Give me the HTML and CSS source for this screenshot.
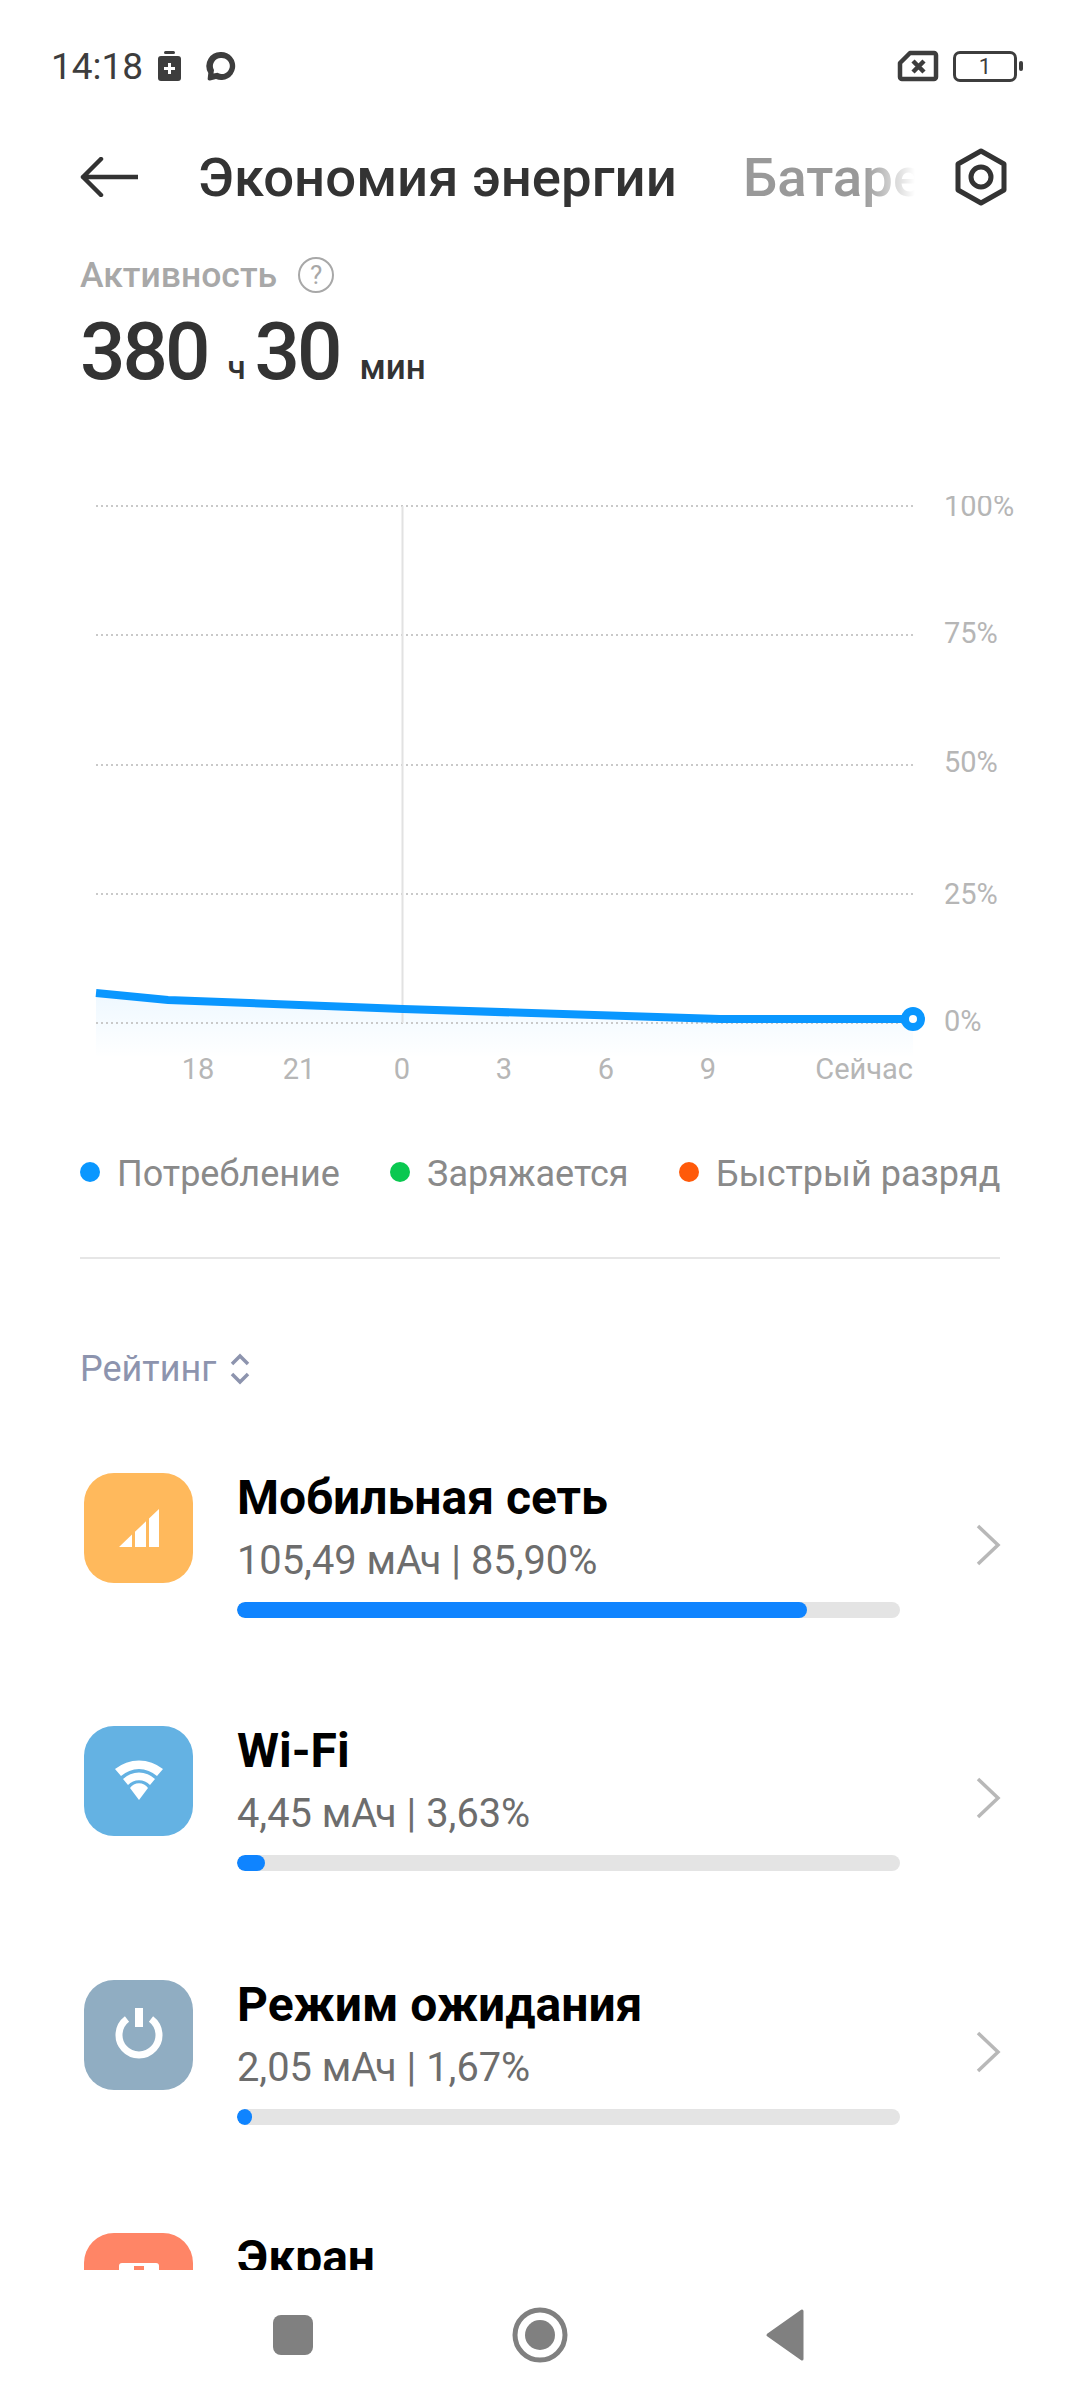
FILE: index.html
```html
<!DOCTYPE html>
<html lang="ru">

<head>
    <meta charset="UTF-8">
    <title>Экономия энергии</title>
    <link rel="stylesheet" href="styles.css">
</head>

<body>
    <!-- Status bar -->
    <div class="status-bar">
        <span class="clock">14:18</span>
        <svg class="st-kit" width="24" height="30" viewBox="0 0 24 30">
            <rect x="6" y="0" width="11" height="3" rx="1.5" fill="#3d3d3d" />
            <rect x="0" y="5" width="23" height="25" rx="3" fill="#3d3d3d" />
            <path d="M11.5 12v11M6 17.5h11" stroke="#fff" stroke-width="3" />
        </svg>
        <svg class="st-chat" width="30" height="30" viewBox="0 0 30 30">
            <path d="M15 1a14 14 0 1 1-5 27l-6 1.500c-1.500.3-2.500-.5-2.300-2l.6-5.500A14 14 0 0 1 15 1zm0 6a8 8 0 0 0-7 12l-.5 3.500 4-.8a8 8 0 1 0 3.500-14.700z" fill="#3d3d3d" />
        </svg>
        <div class="st-right">
            <svg width="42" height="32" viewBox="0 0 42 32">
                <path d="M13 3h24a2 2 0 0 1 2 2v22a2 2 0 0 1-2 2H5a2 2 0 0 1-2-2V13z" fill="none" stroke="#3d3d3d" stroke-width="4.500" stroke-linejoin="round" />
                <path d="M16 11l11 11M27 11L16 22" stroke="#3d3d3d" stroke-width="4.500" />
            </svg>
            <div class="battery"><span>1</span></div>
            <div class="battery-nub"></div>
        </div>
    </div>

    <!-- Header with tabs -->
    <div class="header">
        <svg class="back" width="58" height="40" viewBox="0 0 58 40">
            <path d="M21 2L3 20l18 18M3 20h55" fill="none" stroke="#333" stroke-width="4.500" stroke-linecap="round" stroke-linejoin="round" />
        </svg>
        <div class="tab-active">Экономия энергии</div>
        <div class="tab-next">Батарея</div>
        <svg class="settings" width="54" height="58" viewBox="0 0 54 58">
            <path d="M27 3l23 13v26L27 55 4 42V16z" fill="none" stroke="#333" stroke-width="5" stroke-linejoin="round" />
            <circle cx="27" cy="29" r="10" fill="none" stroke="#333" stroke-width="5" />
        </svg>
    </div>

    <!-- Summary -->
    <div class="summary">
        <div class="summary-label">
            <span>Активность</span>
            <div class="help">?</div>
        </div>
        <div class="summary-value">
            <span class="big">380</span><span class="unit unit-h">ч</span><span class="big">30</span><span class="unit unit-m">мин</span>
        </div>
    </div>

    <!-- Chart -->
    <svg class="chart" width="1080" height="600" viewBox="0 0 1080 600">
        <defs>
            <linearGradient id="fade" x1="0" y1="0" x2="0" y2="1">
                <stop offset="0" stop-color="#0a97ff" stop-opacity="0.07" />
                <stop offset="1" stop-color="#0a97ff" stop-opacity="0" />
            </linearGradient>
        </defs>
        <path d="M96 497L168 504 403 513 720 523H913V562H96z" fill="url(#fade)" />
        <g stroke="#c9c9c9" stroke-width="2" stroke-dasharray="2 3">
            <line x1="96" y1="10" x2="915" y2="10" />
            <line x1="96" y1="139" x2="915" y2="139" />
            <line x1="96" y1="269" x2="915" y2="269" />
            <line x1="96" y1="398" x2="915" y2="398" />
            <line x1="96" y1="527" x2="915" y2="527" />
        </g>
        <line x1="402.500" y1="10" x2="402.500" y2="527" stroke="#e2e2e2" stroke-width="2" />
        <path d="M96 497L168 504 403 513 720 523H913" fill="none" stroke="#0a97ff" stroke-width="8" />
        <circle cx="913" cy="523" r="8" fill="#fff" stroke="#0a97ff" stroke-width="8" />
        <g class="y-label">
            <text x="944" y="20">100%</text>
            <text x="944" y="147">75%</text>
            <text x="944" y="276">50%</text>
            <text x="944" y="408">25%</text>
            <text x="944" y="535">0%</text>
        </g>
        <g class="x-label">
            <text x="198" y="583">18</text>
            <text x="299" y="583">21</text>
            <text x="402" y="583">0</text>
            <text x="504" y="583">3</text>
            <text x="606" y="583">6</text>
            <text x="708" y="583">9</text>
            <text class="x-now" x="913" y="583">Сейчас</text>
        </g>
    </svg>

    <!-- Legend -->
    <div class="legend">
        <div class="legend-item li-use"><i class="dot dot-blue"></i>Потребление</div>
        <div class="legend-item li-chg"><i class="dot dot-green"></i>Заряжается</div>
        <div class="legend-item"><i class="dot dot-orange"></i>Быстрый разряд</div>
    </div>

    <div class="divider"></div>

    <div class="rating">
        <span>Рейтинг</span>
        <svg width="24" height="32" viewBox="0 0 24 32">
            <path d="M4 11l8-8 8 8M4 21l8 8 8-8" fill="none" stroke="#8d94ae" stroke-width="3.500" />
        </svg>
    </div>

    <!-- Usage list, cut off by the nav bar -->
    <div class="list">
        <div class="row">
            <div class="app-icon icon-mobile">
                <svg width="60" height="60" viewBox="0 0 60 60">
                    <path d="M10 49L23 36.600V49zM26 33.800L37 23.300V49H26zM40 20.500L50 11V49H40z" fill="#fff" />
                </svg>
            </div>
            <div class="row-body">
                <div class="row-title">Мобильная сеть</div>
                <div class="row-sub">105,49 мАч | 85,90%</div>
                <div class="track"><div class="fill" style="width:86%"></div></div>
            </div>
            <svg class="chev" width="26" height="44" viewBox="0 0 26 44">
                <path d="M3 3l20 19L3 41" fill="none" stroke="#b8b8b8" stroke-width="3.500" />
            </svg>
        </div>
        <div class="row">
            <div class="app-icon icon-wifi">
                <svg width="60" height="50" viewBox="0 0 60 50">
                    <path d="M6 13a38 38 0 0 1 48 0l-6 7a27 27 0 0 0-36 0z" fill="#fff" />
                    <path d="M14 23a23 23 0 0 1 32 0l-5 6a15 15 0 0 0-22 0z" fill="#fff" />
                    <path d="M21 32a11 11 0 0 1 18 0l-9 12z" fill="#fff" />
                </svg>
            </div>
            <div class="row-body">
                <div class="row-title">Wi-Fi</div>
                <div class="row-sub">4,45 мАч | 3,63%</div>
                <div class="track"><div class="fill" style="width:4.200%"></div></div>
            </div>
            <svg class="chev" width="26" height="44" viewBox="0 0 26 44">
                <path d="M3 3l20 19L3 41" fill="none" stroke="#b8b8b8" stroke-width="3.500" />
            </svg>
        </div>
        <div class="row">
            <div class="app-icon icon-standby">
                <svg width="60" height="60" viewBox="0 0 60 60">
                    <path d="M18 14a20 20 0 1 0 24 0" fill="none" stroke="#fff" stroke-width="7" />
                    <path d="M30 3v19" stroke="#fff" stroke-width="8" />
                </svg>
            </div>
            <div class="row-body">
                <div class="row-title">Режим ожидания</div>
                <div class="row-sub">2,05 мАч | 1,67%</div>
                <div class="track"><div class="fill" style="width:2.200%"></div></div>
            </div>
            <svg class="chev" width="26" height="44" viewBox="0 0 26 44">
                <path d="M3 3l20 19L3 41" fill="none" stroke="#b8b8b8" stroke-width="3.500" />
            </svg>
        </div>
        <div class="row">
            <div class="app-icon icon-screen">
                <svg width="60" height="60" viewBox="0 0 60 60">
                    <rect x="10" y="30" width="40" height="30" rx="3" fill="#fff" />
                    <rect x="25" y="33" width="10" height="5" fill="#ff8566" />
                </svg>
            </div>
            <div class="row-body">
                <div class="row-title">Экран</div>
            </div>
        </div>
    </div>

    <!-- Nav bar -->
    <div class="nav-bar">
        <div class="nav-square"></div>
        <svg width="56" height="56" viewBox="0 0 56 56">
            <circle cx="28" cy="28" r="25" fill="none" stroke="#808080" stroke-width="5" />
            <circle cx="28" cy="28" r="15" fill="#808080" />
        </svg>
        <svg width="40" height="54" viewBox="0 0 40 54">
            <path d="M3 27L37 3v48z" fill="#808080" stroke="#808080" stroke-width="3" stroke-linejoin="round" />
        </svg>
    </div>
</body>

</html>
```

FILE: styles.css
```css
body {
    margin: 0;
    width: 1080px;
    height: 2400px;
    overflow: hidden;
    background: #fff;
    font-family: Roboto, "Noto Sans", sans-serif;
    color: #333;
}

svg {
    display: block;
    flex: none;
}

/* Status bar */
.status-bar {
    display: flex;
    align-items: center;
    height: 30px;
    padding: 51px 57px 0 51px;
}

.clock {
    font-size: 37px;
    color: #3d3d3d;
    width: 107px;
}

.st-chat {
    margin-left: 24px;
}

.st-right {
    display: flex;
    align-items: center;
    margin-left: auto;
}

.battery {
    width: 58px;
    height: 25px;
    margin-left: 14px;
    border: 3px solid #3d3d3d;
    border-radius: 7px;
    display: flex;
    align-items: center;
    justify-content: center;
    font-size: 22px;
    color: #3d3d3d;
}

.battery-nub {
    width: 4px;
    height: 10px;
    margin-left: 2px;
    border-radius: 2px;
    background: #3d3d3d;
}

/* Header */
.header {
    display: flex;
    align-items: center;
    height: 58px;
    margin-top: 67px;
    padding-left: 80px;
}

.tab-active {
    margin-left: 60px;
    font-size: 54.500px;
    font-weight: 500;
    white-space: nowrap;
    width: 545px;
}

.tab-next {
    width: 172px;
    overflow: hidden;
    font-size: 54.500px;
    font-weight: 500;
    color: #999;
    white-space: nowrap;
    -webkit-mask-image: linear-gradient(to right, #000 70%, transparent 100%);
    mask-image: linear-gradient(to right, #000 70%, transparent 100%);
}

.settings {
    margin-left: 39px;
}

/* Summary */
.summary {
    padding: 0 80px;
}

.summary-label {
    display: flex;
    align-items: center;
    height: 40px;
    margin-top: 49px;
    font-size: 35.500px;
    font-weight: 500;
    color: #a8a8a8;
}

.help {
    width: 32px;
    height: 32px;
    margin-left: 21px;
    border: 2px solid #a8a8a8;
    border-radius: 50%;
    font-size: 26px;
    font-weight: 400;
    line-height: 32px;
    text-align: center;
}

.summary-value {
    display: flex;
    align-items: baseline;
    height: 80px;
    margin-top: 17px;
    line-height: 80px;
}

.big {
    font-size: 80px;
    font-weight: 500;
    letter-spacing: -3px;
}

.unit {
    font-size: 33px;
    font-weight: 500;
}

.unit-h {
    margin: 0 9px 0 20px;
}

.unit-m {
    margin-left: 20px;
    font-size: 35px;
}

/* Chart */
.chart {
    margin-top: 104px;
}

.y-label text,
.x-label text {
    font-size: 29px;
    fill: #b6b6b6;
}

.x-label text {
    text-anchor: middle;
}

.x-label .x-now {
    text-anchor: end;
}

/* Legend */
.legend {
    display: flex;
    align-items: center;
    height: 40px;
    margin-top: 58px;
    padding-left: 80px;
    font-size: 36px;
    color: #8a8a8a;
    white-space: nowrap;
}

.legend-item {
    display: flex;
    align-items: center;
}

.li-use {
    width: 310px;
}

.li-chg {
    width: 289px;
}

.dot {
    width: 20px;
    height: 20px;
    margin: -4px 17px 0 0;
    border-radius: 50%;
}

.dot-blue {
    background: #0a97ff;
}

.dot-green {
    background: #0ac850;
}

.dot-orange {
    background: #ff5a0a;
}

.divider {
    height: 2px;
    margin: 63px 80px 0;
    background: #e6e6e6;
}

.rating {
    display: flex;
    align-items: center;
    gap: 12px;
    height: 40px;
    margin-top: 90px;
    padding-left: 80px;
    font-size: 36px;
    color: #8d94ae;
}

/* List */
.list {
    height: 797px;
    margin-top: 84px;
    overflow: hidden;
}

.row {
    display: flex;
    align-items: flex-start;
    height: 253.300px;
    padding-left: 84px;
}

.app-icon {
    width: 109px;
    height: 110px;
    border-radius: 30px;
    display: flex;
    align-items: center;
    justify-content: center;
    flex: none;
}

.icon-mobile {
    background: #ffb95c;
}

.icon-wifi {
    background: #64b2e3;
}

.icon-standby {
    background: #90adc2;
}

.icon-screen {
    background: #ff8566;
    align-items: flex-start;
}

.row-body {
    width: 663px;
    margin-left: 44px;
}

.row-title {
    height: 50px;
    font-size: 48px;
    font-weight: 700;
    line-height: 50px;
    color: #000;
}

.row-sub {
    height: 44px;
    margin-top: 16px;
    font-size: 39.800px;
    line-height: 44px;
    color: #6d6d6d;
}

.track {
    height: 16px;
    margin-top: 19px;
    border-radius: 8px;
    background: #e4e4e4;
    overflow: hidden;
}

.fill {
    height: 100%;
    min-width: 14px;
    border-radius: 8px;
    background: #0f84ff;
}

.chev {
    margin: 50px 0 0 75px;
}

/* Nav bar */
.nav-bar {
    display: flex;
    align-items: center;
    height: 60px;
    margin-top: 35px;
    padding-left: 273px;
}

.nav-square {
    width: 40px;
    height: 40px;
    border-radius: 8px;
    background: #808080;
}

.nav-bar svg:nth-child(2) {
    margin-left: 199px;
}

.nav-bar svg:nth-child(3) {
    margin-left: 197px;
}
```
